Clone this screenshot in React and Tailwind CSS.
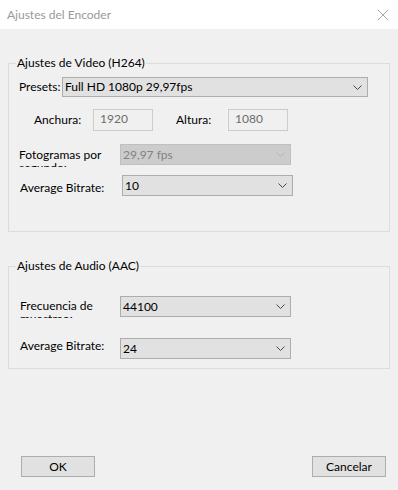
import { X } from 'lucide-react'

/**
 * "Ajustes del Encoder" dialog — Win10 style form.
 * Two group boxes (video / audio) and an OK / Cancelar footer.
 */

function Chevron({ disabled }) {
  return (
    <svg width="9" height="5" viewBox="0 0 9 5" className="shrink-0">
      <path
        d="M0.5 0.5 L4.5 4.5 L8.5 0.5"
        fill="none"
        stroke={disabled ? '#b4b4b4' : '#4a4a4a'}
        strokeWidth="1"
      />
    </svg>
  )
}

function Combo({ value, className = '', disabled }) {
  return (
    <div
      className={`flex items-center justify-between pl-[2px] pr-[5px] border ${
        disabled
          ? 'bg-[#cccccc] border-[#bfbfbf] text-[#838383]'
          : 'bg-[#e1e1e1] border-[#adadad] text-black'
      } ${className}`}
    >
      <span className="leading-[14px]">{value}</span>
      <Chevron disabled={disabled} />
    </div>
  )
}

function TextBox({ value, className = '' }) {
  return (
    <div className={`border border-[#cccccc] bg-[#f0f0f0] text-[#6d6d6d] pl-[6px] pt-[2px] leading-[14px] ${className}`}>
      {value}
    </div>
  )
}

function Group({ title, className = '', children }) {
  return (
    <fieldset className={`border border-[#dcdcdc] ${className}`}>
      <legend className="ml-[7px] px-[1px] leading-[14px] text-black">{title}</legend>
      {children}
    </fieldset>
  )
}

function WinButton({ children }) {
  return (
    <button className="w-[74px] h-[21px] border border-[#adadad] bg-[#e1e1e1] text-black leading-[14px]">
      {children}
    </button>
  )
}

export default function App() {
  return (
    <div
      className="w-[398px] h-[490px] bg-[#f0f0f0] flex flex-col text-[12px]"
      style={{ fontFamily: 'Lato, "Liberation Sans", Arial, sans-serif' }}
    >
      {/* ── Title bar ─────────────────────────────────────────── */}
      <div className="h-[29px] bg-white flex items-center justify-between pl-[7px] pr-[5px] shrink-0">
        <span className="text-[#999999] leading-[14px]">Ajustes del Encoder</span>
        <X size={20} strokeWidth={0.9} color="#8a8a8a" />
      </div>

      <div className="px-[8px]">
        {/* ── Video ─────────────────────────────────────────────── */}
        <Group title="Ajustes de Video (H264)" className="mt-[27px] pb-[35px]">
          <div className="mt-[7px] h-[20px] flex items-center ml-[10px]">
            <span className="w-[43px] leading-[14px]">Presets:</span>
            <Combo value="Full HD 1080p 29,97fps" className="w-[306px] h-[20px]" />
          </div>

          <div className="mt-[12px] h-[22px] flex items-center ml-[25px]">
            <span className="w-[59px] leading-[14px]">Anchura:</span>
            <TextBox value="1920" className="w-[60px] h-[22px]" />
            <span className="ml-[23px] w-[52px] leading-[14px]">Altura:</span>
            <TextBox value="1080" className="w-[60px] h-[22px]" />
          </div>

          <div className="mt-[13px] h-[21px] flex items-start ml-[10px]">
            <span className="mt-[4px] w-[101px] h-[19px] overflow-hidden leading-[13px]">
              Fotogramas por segundo:
            </span>
            <Combo value="29,97 fps" disabled className="w-[171px] h-[21px]" />
          </div>

          <div className="mt-[10px] h-[21px] flex items-start ml-[11px]">
            <span className="mt-[6px] w-[102px] leading-[14px]">Average Bitrate:</span>
            <Combo value="10" className="w-[171px] h-[21px]" />
          </div>
        </Group>

        {/* ── Audio ─────────────────────────────────────────────── */}
        <Group title="Ajustes de Audio (AAC)" className="mt-[27px] pb-[9px]">
          <div className="mt-[23px] h-[21px] flex items-start ml-[11px]">
            <span className="mt-[3px] w-[100px] h-[19px] overflow-hidden leading-[13px]">
              Frecuencia de muestreo:
            </span>
            <Combo value="44100" className="w-[171px] h-[21px]" />
          </div>

          <div className="mt-[21px] h-[21px] flex items-start ml-[11px]">
            <span className="mt-[1px] w-[100px] leading-[14px]">Average Bitrate:</span>
            <Combo value="24" className="w-[171px] h-[21px]" />
          </div>
        </Group>

        {/* ── Footer ────────────────────────────────────────────── */}
        <div className="mt-[87px] flex justify-between pl-[13px] pr-[4px]">
          <WinButton>OK</WinButton>
          <WinButton>Cancelar</WinButton>
        </div>
      </div>
    </div>
  )
}
